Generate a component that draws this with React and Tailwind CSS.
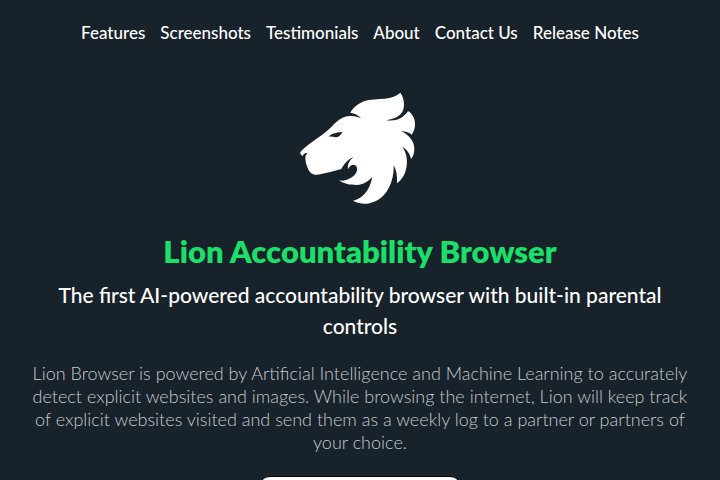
import React from 'react';

const LINKS = [
  { label: 'Features', href: '#features' },
  { label: 'Screenshots', href: '#screenshots' },
  { label: 'Testimonials', href: '#testimonials' },
  { label: 'About', href: '#about' },
  { label: 'Contact Us', href: '#contact' },
  { label: 'Release Notes', href: '#release-notes' },
];

function LionLogo() {
  return (
    <svg viewBox="0 0 420 390" className="h-[130px] w-[140px]" role="img" aria-label="Lion Browser">
      {/* head and mane */}
      <path
        fill="#fff"
        d="M31 204 C38 196 48 188 58 180 C74 167 92 156 108 143 C120 133 130 122 140 113 C151 103 164 97 178 96 C193 95 204 98 213 103 C205 93 194 88 181 86 C190 68 211 53 236 48 C260 45 280 46 298 42 C313 38 324 32 331 26 C338 36 342 47 342 60 C342 77 337 87 328 94 C317 103 303 106 289 109 C309 111 325 108 337 99 C346 92 351 87 354 81 C366 88 374 101 375 118 C376 132 371 144 365 152 C356 145 346 142 333 142 C352 150 365 163 371 181 C375 198 373 214 363 225 C360 209 352 198 337 188 C348 204 353 223 350 245 C347 268 337 286 321 298 C322 278 320 260 311 244 C312 274 304 303 289 324 C275 344 255 356 230 359 C215 360 201 357 189 350 C215 344 239 322 247 278 C235 292 220 301 200 303 C180 303 162 300 147 289 C158 291 169 290 180 283 C195 275 203 263 201 251 C198 240 182 238 174 256 C172 240 178 229 190 220 C173 226 163 240 154 255 C134 261 114 266 94 270 C81 274 70 273 63 267 C53 258 47 238 46 222 C45 217 50 211 52 207 C45 206 41 210 38 216 C33 213 30 209 31 204 Z"
      />
      {/* eye */}
      <path fill="#18222a" d="M116 158 C124 149 135 146 158 144 C152 153 145 161 136 160 C130 158 124 157 116 158 Z" />
    </svg>
  );
}

export default function App() {
  return (
    <div className="h-screen overflow-hidden bg-[#18222a] font-['Lato',sans-serif] text-white">
      <nav className="flex justify-center gap-[15px] pt-5">
        {LINKS.map((link) => (
          <a key={link.label} href={link.href} className="text-[17px] leading-[26px] font-medium">
            {link.label}
          </a>
        ))}
      </nav>

      <main className="flex flex-col items-center px-6 pt-[38px] text-center">
        <LionLogo />
        <h1 className="mt-4 text-[31px] leading-[42px] font-extrabold text-[#1bdf69]">Lion Accountability Browser</h1>
        <h2 className="mt-[7px] text-[21px] leading-[31px] font-medium">
          The first AI-powered accountability browser with built-in parental controls
        </h2>
        <p className="mt-[21px] text-[18px] leading-[23px] font-light text-[#c6cacd]">
          Lion Browser is powered by Artificial Intelligence and Machine Learning to accurately detect explicit
          websites and images. While browsing the internet, Lion will keep track of explicit websites visited and
          send them as a weekly log to a partner or partners of your choice.
        </p>
        <div className="mt-[22px] h-[60px] w-[204px] rounded-xl border border-black bg-white" />
      </main>
    </div>
  );
}
